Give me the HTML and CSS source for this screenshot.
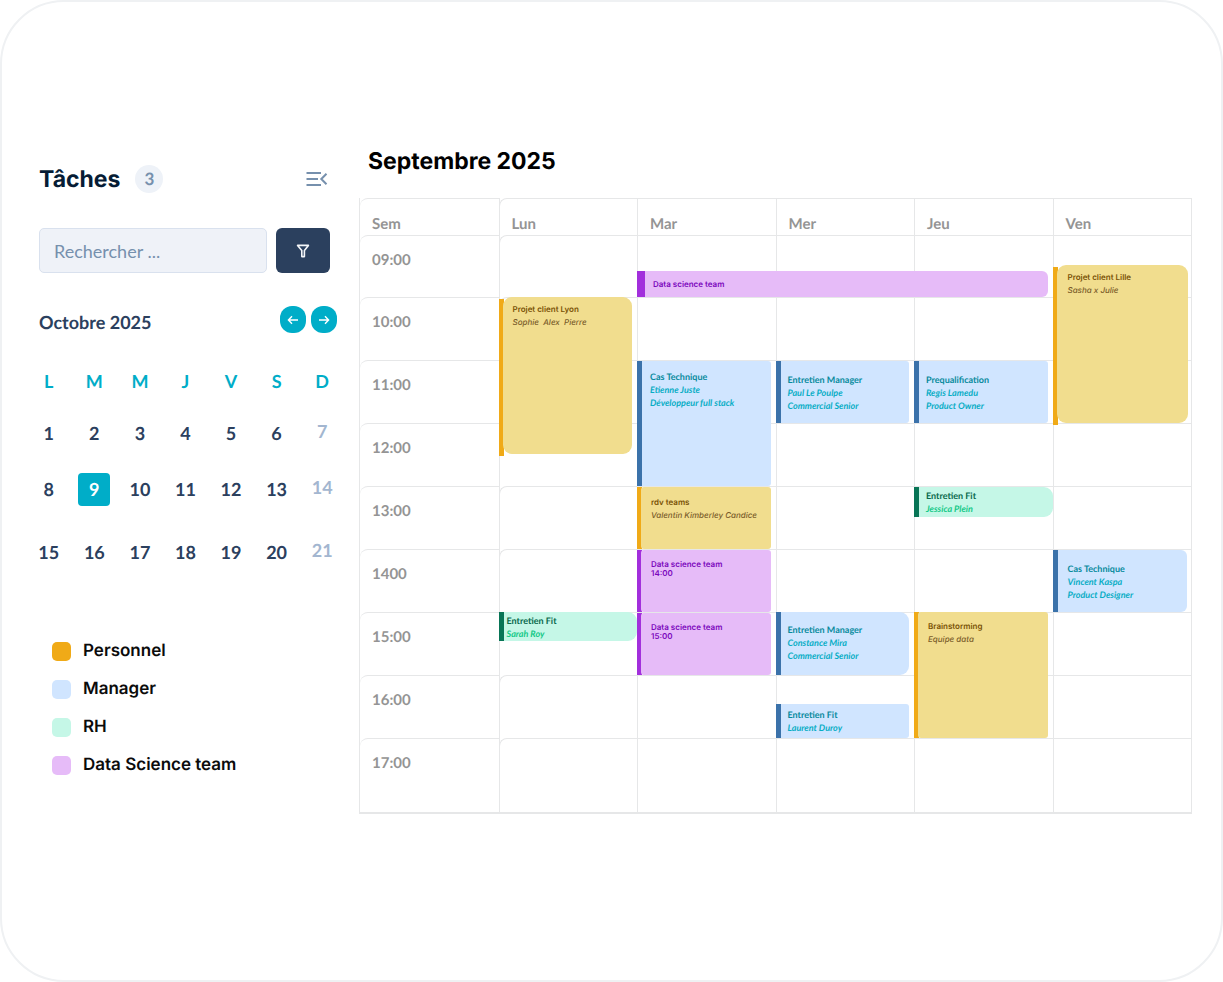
FILE: index.html
```html
<!DOCTYPE html>
<html lang="fr">
<head>
<meta charset="utf-8">
<meta name="viewport" content="width=device-width, initial-scale=1">
<title>Tâches</title>
<link rel="stylesheet" href="styles.css">
</head>
<body>
<div class="frame">
  <aside class="sidebar">
    <header class="side-head">
      <h1 class="side-title">Tâches</h1>
      <span class="count">3</span>
      <button class="collapse" type="button" aria-label="Replier">
        <svg width="22" height="16" viewBox="0 0 22 16" fill="none" stroke="#7690ad" stroke-width="2"><path d="M0.5 2H15M0.5 8H12M0.5 14H15M20.5 2.8L15.3 8L20.5 13.2"/></svg>
      </button>
    </header>
    <form class="search">
      <input class="search-input" type="text" placeholder="Rechercher ..." aria-label="Rechercher">
      <button class="filter" type="button" aria-label="Filtrer">
        <svg width="14" height="14" viewBox="0 0 14 14" fill="none" stroke="#f4f6f9" stroke-width="1.6" stroke-linejoin="round"><path d="M1.6 1.4H12.4L8.4 6.6V12.6H5.8V6.6Z"/></svg>
      </button>
    </form>
    <div class="month">
      <h2 class="month-name">Octobre 2025</h2>
      <button class="nav" type="button" aria-label="Mois précédent"><svg width="12" height="10" viewBox="0 0 12 10" fill="none" stroke="#fff" stroke-width="1.4"><path d="M11 5H1.6M5 1.2L1.4 5L5 8.8"/></svg></button>
      <button class="nav" type="button" aria-label="Mois suivant"><svg width="12" height="10" viewBox="0 0 12 10" fill="none" stroke="#fff" stroke-width="1.4"><path d="M1 5H10.4M7 1.2L10.6 5L7 8.8"/></svg></button>
    </div>
    <table class="days">
      <thead><tr><th>L</th><th>M</th><th>M</th><th>J</th><th>V</th><th>S</th><th>D</th></tr></thead>
      <tbody>
        <tr><td>1</td><td>2</td><td>3</td><td>4</td><td>5</td><td>6</td><td class="off">7</td></tr>
        <tr><td>8</td><td><span class="today">9</span></td><td>10</td><td>11</td><td>12</td><td>13</td><td class="off">14</td></tr>
        <tr class="last"><td>15</td><td>16</td><td>17</td><td>18</td><td>19</td><td>20</td><td class="off">21</td></tr>
      </tbody>
    </table>
    <ul class="legend">
      <li><span class="swatch personal"></span>Personnel</li>
      <li><span class="swatch manager"></span>Manager</li>
      <li><span class="swatch rh"></span>RH</li>
      <li><span class="swatch data"></span>Data Science team</li>
    </ul>
  </aside>

  <main class="agenda">
    <h2 class="agenda-title">Septembre 2025</h2>
    <div class="week">
      <div class="cell head c1">Sem</div><div class="cell head c2">Lun</div><div class="cell head c3">Mar</div><div class="cell head c4">Mer</div><div class="cell head c5">Jeu</div><div class="cell head c6">Ven</div>
      <div class="cell h9 c1">09:00</div><div class="cell h9 c2"></div><div class="cell h9 c3"></div><div class="cell h9 c4"></div><div class="cell h9 c5"></div><div class="cell h9 c6"></div>
      <div class="cell h10 c1">10:00</div><div class="cell h10 c2"></div><div class="cell h10 c3"></div><div class="cell h10 c4"></div><div class="cell h10 c5"></div><div class="cell h10 c6"></div>
      <div class="cell h11 c1">11:00</div><div class="cell h11 c2 plain"></div><div class="cell h11 c3"></div><div class="cell h11 c4"></div><div class="cell h11 c5"></div><div class="cell h11 c6"></div>
      <div class="cell h12 c1">12:00</div><div class="cell h12 c2 plain"></div><div class="cell h12 c3"></div><div class="cell h12 c4"></div><div class="cell h12 c5"></div><div class="cell h12 c6"></div>
      <div class="cell h13 c1">13:00</div><div class="cell h13 c2"></div><div class="cell h13 c3"></div><div class="cell h13 c4"></div><div class="cell h13 c5"></div><div class="cell h13 c6"></div>
      <div class="cell h14 c1">1400</div><div class="cell h14 c2"></div><div class="cell h14 c3"></div><div class="cell h14 c4"></div><div class="cell h14 c5"></div><div class="cell h14 c6"></div>
      <div class="cell h15 c1">15:00</div><div class="cell h15 c2"></div><div class="cell h15 c3"></div><div class="cell h15 c4"></div><div class="cell h15 c5"></div><div class="cell h15 c6"></div>
      <div class="cell h16 c1">16:00</div><div class="cell h16 c2"></div><div class="cell h16 c3"></div><div class="cell h16 c4"></div><div class="cell h16 c5"></div><div class="cell h16 c6"></div>
      <div class="cell h17 c1">17:00</div><div class="cell h17 c2"></div><div class="cell h17 c3"></div><div class="cell h17 c4"></div><div class="cell h17 c5"></div><div class="cell h17 c6"></div>

      <article class="event personal large lyon"><div class="body"><h3>Projet client Lyon</h3><p>Sophie&nbsp; Alex&nbsp; Pierre</p></div></article>
      <article class="event data wide science"><div class="body"><h3>Data science team</h3></div></article>
      <article class="event personal large lille"><div class="body"><h3>Projet client Lille</h3><p>Sasha x Julie</p></div></article>
      <article class="event manager tech"><div class="body"><h3>Cas Technique</h3><p>Etienne Juste</p><p>Développeur full stack</p></div></article>
      <article class="event manager middle poulpe"><div class="body"><h3>Entretien Manager</h3><p>Paul Le Poulpe</p><p>Commercial Senior</p></div></article>
      <article class="event manager middle lamedu"><div class="body"><h3>Prequalification</h3><p>Regis Lamedu</p><p>Product Owner</p></div></article>
      <article class="event personal rdv"><div class="body"><h3>rdv teams</h3><p>Valentin Kimberley Candice</p></div></article>
      <article class="event rh short plein"><div class="body"><h3>Entretien Fit</h3><p>Jessica Plein</p></div></article>
      <article class="event data sci14"><div class="body"><h3>Data science team<br>14:00</h3></div></article>
      <article class="event manager middle kaspa"><div class="body"><h3>Cas Technique</h3><p>Vincent Kaspa</p><p>Product Designer</p></div></article>
      <article class="event rh short roy"><div class="body"><h3>Entretien Fit</h3><p>Sarah Roy</p></div></article>
      <article class="event data sci15"><div class="body"><h3>Data science team<br>15:00</h3></div></article>
      <article class="event manager middle mira"><div class="body"><h3>Entretien Manager</h3><p>Constance Mira</p><p>Commercial Senior</p></div></article>
      <article class="event personal brain"><div class="body"><h3>Brainstorming</h3><p>Equipe data</p></div></article>
      <article class="event manager duroy"><div class="body"><h3>Entretien Fit</h3><p>Laurent Duroy</p></div></article>
    </div>
  </main>
</div>
</body>
</html>
```
FILE: styles.css
```css
* { box-sizing: border-box; }
body { margin: 0; background: #fff; font-family: Lato, "Liberation Sans", sans-serif; text-rendering: geometricPrecision; }
h1, h2, h3, p, ul { margin: 0; padding: 0; }
button { border: 0; padding: 0; cursor: pointer; display: flex; align-items: center; justify-content: center; }

.frame {
  min-height: 100vh;
  display: flex;
  gap: 14px;
  padding: 141px 29px 40px 24px;
  border: 2px solid #eff1f3;
  border-radius: 64px;
}

/* Sidebar */
.sidebar { flex: 0 0 319px; min-width: 0; margin-top: 21px; }
.side-head { display: flex; align-items: center; height: 29px; padding: 0 17px 0 13px; }
.side-title { font: 700 23px/28px Inter, sans-serif; color: #061c35; }
.count {
  width: 28px; height: 28px; margin-left: 15px; border-radius: 50%;
  background: #eef2f8; color: #7690ad;
  font-size: 17px; font-weight: 700; line-height: 28px; text-align: center;
}
.collapse { margin-left: auto; background: none; }
.search { display: flex; gap: 9px; margin-top: 35px; padding: 0 15px 0 13px; }
.search-input {
  flex: 1; min-width: 0; height: 45px; padding: 0 14px;
  border: 1px solid #d9e1ee; border-radius: 5px; background: #eff2f8;
  font: 18px Lato, sans-serif; color: #2b405e;
}
.search-input::placeholder { color: #7690ad; opacity: 1; }
.filter { width: 54px; height: 45px; border-radius: 6px; background: #2b405e; }
.month { display: flex; align-items: center; gap: 5px; margin-top: 33px; padding: 0 8px 0 13px; }
.month-name { flex: 1; padding-top: 5px; font-size: 18px; font-weight: 700; line-height: 22px; color: #2b405e; }
.nav { width: 26px; height: 27px; border-radius: 12px; background: #00adc8; }

.days { width: 100%; margin-top: 23px; border-collapse: collapse; table-layout: fixed; text-align: center; font-size: 18px; font-weight: 700; color: #2b405e; }
.days th, .days td { padding: 0; height: 56px; vertical-align: middle; }
.days th { height: 49px; color: #00adc8; }
.days .last td { height: 69px; }
.days .off { padding-bottom: 4px; color: #a3b6d0; }
.today { display: block; width: 32px; margin: 0 auto; border-radius: 4px; background: #00adc8; color: #fff; line-height: 33px; }

.legend { list-style: none; display: grid; gap: 16px; margin-top: 54px; padding-left: 26px; }
.legend li { display: flex; align-items: center; gap: 12px; font: 600 17px/24px Inter, sans-serif; height: 22px; color: #0b0b0b; }
.swatch { width: 19px; height: 19px; border-radius: 5px; background: var(--fill); }
.swatch.personal { background: var(--bar); }

/* Categories */
.personal { --fill: #f1dd8e; --bar: #f0aa17; --title: #7a5206; --text: #7a5c2a; }
.manager { --fill: #d0e5ff; --bar: #3b72aa; --title: #078a9d; --text: #08adc5; }
.rh { --fill: #c5f7e7; --bar: #087556; --title: #08694c; --text: #14c987; }
.data { --fill: #e6bbf8; --bar: #a22fdc; --title: #7c08bd; --text: #7c08bd; }

/* Week */
.agenda { flex: 1; min-width: 0; }
.agenda-title { padding: 1px 0 0 9px; font: 700 23px/34px Inter, sans-serif; color: #000; }
.week {
  display: grid;
  grid-template-columns: repeat(6, minmax(0, 1fr));
  grid-template-rows: 37px 31px 31px repeat(7, 31px 32px) 37px 37px;
  margin-top: 20px;
  border: solid #e6e7e8;
  border-width: 0 1px 2px;
}
.cell { border: solid #e6e7e8; border-width: 1px 0 0 1px; padding: 14px 12px 0; font-size: 15px; font-weight: 700; line-height: 20px; color: #949494; }
.c1 { grid-column: 1; border-left-width: 0; border-radius: 8px 0 0 0; }
.c2 { grid-column: 2; border-radius: 8px 0 0 0; }
.plain { border-radius: 0; }
.c1 { border-right-width: 1px; margin-right: -1px; }
.c3 { grid-column: 3; }
.c4 { grid-column: 4; }
.c5 { grid-column: 5; }
.c6 { grid-column: 6; }
.head { grid-row: 1; padding-top: 15px; }
.h9 { grid-row: 2 / 4; }
.h10 { grid-row: 4 / 6; }
.h11 { grid-row: 6 / 8; }
.h12 { grid-row: 8 / 10; }
.h13 { grid-row: 10 / 12; }
.h14 { grid-row: 12 / 14; }
.h15 { grid-row: 14 / 16; }
.h16 { grid-row: 16 / 18; }
.h17 { grid-row: 18 / 20; }

/* Events */
.event { --radius: 3px; --top: 9px; --left: 9px; position: relative; display: flex; margin: 1px 5px 0 0; padding-left: 4px; font-size: 8px; line-height: 13px; }
.event::before { content: ""; position: absolute; inset: 0 auto 0 0; width: 5px; background: var(--bar); }
.body { position: relative; flex: 1; min-width: 0; padding: var(--top) 0 0 var(--left); border-radius: var(--radius); background: var(--fill); white-space: nowrap; }
.event h3 { font-size: inherit; font-weight: 700; color: var(--title); }
.event p { font-style: italic; font-weight: 700; color: var(--text); }
.manager .body, .rh .body { border-top-left-radius: 0; border-bottom-left-radius: 0; margin-left: 1px; }
.personal, .data { font-family: Inter, sans-serif; }
.personal h3, .data h3 { font-weight: 600; }
.event.personal p { font-weight: 500; }
.event.manager { font-size: 9px; }
.event.rh { font-size: 9px; }
.large { --radius: 9px; --top: 6px; --left: 10px; margin-top: 0; }
.large::before { inset: 2px auto -2px 0; }
.middle { --top: 12px; --left: 7px; }
.short { --radius: 0 9px 9px 0; --top: 2px; --left: 3px; margin-right: 0; }
.wide { --radius: 0 6px 6px 0; --top: 7px; --left: 8px; padding-left: 8px; }
.wide::before { width: 8px; }
.data:not(.wide) h3 { line-height: 9px; }

.lyon { grid-area: 4 / 2 / 9 / 3; }
.science { grid-area: 3 / 3 / 4 / 6; margin-top: 5px; }
.lille { grid-area: 3 / 6 / 8 / 7; --top: 6px; --left: 11px; margin: -1px 3px 0 0; }
.tech { grid-area: 6 / 3 / 10 / 4; --left: 8px; }
.poulpe { grid-area: 6 / 4 / 8 / 5; }
.lamedu { grid-area: 6 / 5 / 8 / 6; }
.rdv { grid-area: 10 / 3 / 12 / 4; --left: 10px; }
.plein { grid-area: 10 / 5 / 11 / 6; --left: 7px; }
.sci14 { grid-area: 12 / 3 / 14 / 4; --top: 10px; --left: 10px; }
.kaspa { grid-area: 12 / 6 / 14 / 7; --radius: 6px; --left: 10px; margin-right: 4px; }
.roy { grid-area: 14 / 2 / 15 / 3; margin: 0 0 2px; }
.sci15 { grid-area: 14 / 3 / 16 / 4; --top: 10px; --left: 10px; }
.mira { grid-area: 14 / 4 / 16 / 5; --radius: 9px; --top: 11px; margin-top: 0; }
.brain { grid-area: 14 / 5 / 18 / 6; --left: 10px; --top: 8px; margin-top: 0; }
.duroy { grid-area: 17 / 4 / 18 / 5; --top: 4px; --left: 7px; margin-top: -2px; }
```
